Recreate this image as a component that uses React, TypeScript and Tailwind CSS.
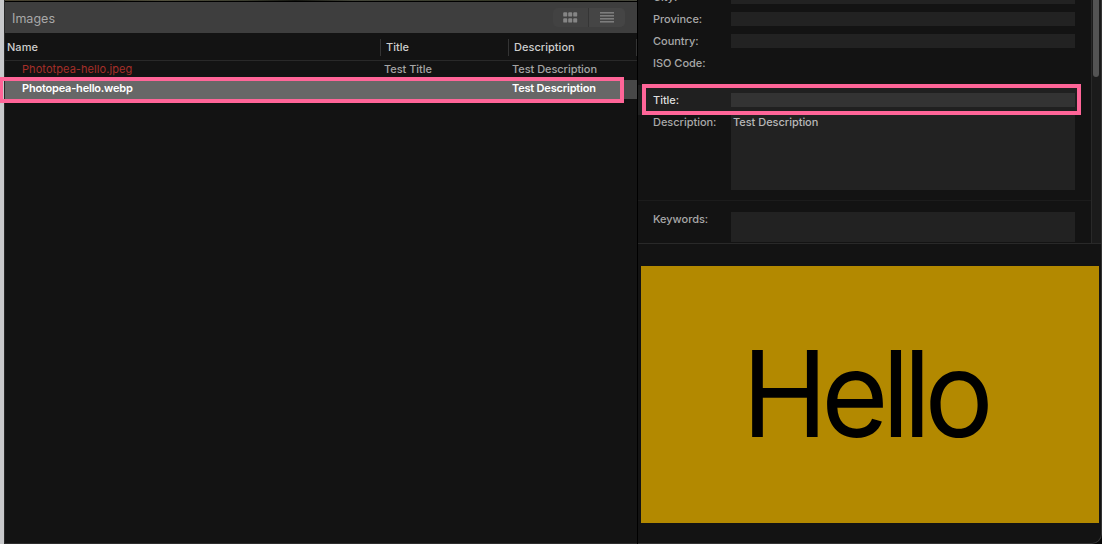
import React from "react";

const columns = "grid grid-cols-[375px_128px_1fr]";

function GridIcon() {
  return (
    <svg width="15" height="11" viewBox="0 0 15 11" fill="#858585">
      {[0, 6].map((y) =>
        [0, 5, 10].map((x) => (
          <rect key={`${x}-${y}`} x={x + 0.2} y={y + 0.2} width="4" height="4.4" rx="0.9" />
        )),
      )}
    </svg>
  );
}

function ListIcon() {
  return (
    <svg width="14" height="11" viewBox="0 0 14 11" fill="#969696">
      {[0, 3, 6, 9].map((y) => (
        <rect key={y} y={y + 0.3} width="14" height="1.1" />
      ))}
    </svg>
  );
}

function ImagesPanel() {
  return (
    <section className="flex h-full w-[633px] shrink-0 flex-col border-l border-[#292929] bg-[#131313]">
      <div className="h-px shrink-0 bg-[linear-gradient(90deg,#4a4432,#39382b_16%,#52503d_25%,#3c3e30_38%,#151611_46%,#44463a_55%,#343725_80%,#47483c)]" />
      <div className="h-px shrink-0 bg-black" />
      <header className="flex h-[31px] shrink-0 items-center justify-between bg-[#3e3e3e] pl-[7px] pr-[12px]">
        <h2 className="pt-[2px] text-[12.5px] leading-4 tracking-[0.02px] text-[#a8a8a8]">Images</h2>
        <div className="flex h-[19px] w-[72px] rounded-[5px] bg-[#424242]">
          <button aria-label="Grid view" className="flex w-[36px] items-center justify-center border-r border-[#353535]">
            <GridIcon />
          </button>
          <button aria-label="List view" className="flex flex-1 items-center justify-center rounded-r-[5px] bg-[#454545] pr-px">
            <ListIcon />
          </button>
        </div>
      </header>
      <div className={`${columns} h-[28px] shrink-0 border-b border-[#292929] text-[11px] font-medium leading-[27px] tracking-[0.03px] text-[#cecece]`}>
        <span className="pl-[2px] pt-px">Name</span>
        <span className="my-[6px] flex h-[17px] items-center border-l border-[#343434] pl-[5px]">Title</span>
        <span className="my-[6px] flex h-[17px] items-center border-x border-[#343434] pl-[5px]">Description</span>
      </div>
      <div className={`${columns} h-[19px] shrink-0 text-[11px] font-medium leading-[17px] tracking-[-0.05px] text-[#a4a4a4]`}>
        <span className="pl-[17px] font-normal tracking-[0.07px] text-[#a62f29]">Phototpea-hello.jpeg</span>
        <span className="pl-[4px]">Test Title</span>
        <span className="pl-[4px]">Test Description</span>
      </div>
      <div className="flex h-[19px] shrink-0 bg-[#484848]">
        <div className={`${columns} w-[617px] bg-[#676767] text-[11px] font-semibold leading-[17px] tracking-[-0.2px] text-white`}>
          <span className="pl-[17px]">Photopea-hello.webp</span>
          <span />
          <span className="pl-[4px]">Test Description</span>
        </div>
      </div>
      <div className="flex-1" />
      <div className="h-px bg-[#2d2d2d]" />
    </section>
  );
}

function Field({ label, labelClass, className, inputClass, value }: {
  label: string;
  labelClass?: string;
  className: string;
  inputClass?: string;
  value?: string;
}) {
  return (
    <div className={`flex shrink-0 pl-[15px] ${className}`}>
      <span className={`w-[78px] shrink-0 text-[11px] font-medium leading-[14px] tracking-[-0.03px] ${labelClass ?? "text-[#a8a8a8]"}`}>{label}</span>
      {inputClass && (
        <div className={`w-[344px] pl-[2px] text-[11px] font-medium leading-[14px] tracking-[-0.03px] text-[#b8b8b8] ${inputClass}`}>{value}</div>
      )}
    </div>
  );
}

function Metadata() {
  return (
    <div className="flex h-[243px] shrink-0 overflow-hidden">
      <form className="flex w-[453px] flex-col">
        <div className="-mt-[10px] flex flex-col">
          <Field label="City:" className="h-[22px]" inputClass="h-[14px] bg-[#222222]" />
          <Field label="Province:" className="h-[22px]" inputClass="h-[14px] bg-[#222222]" />
          <Field label="Country:" className="h-[22px]" inputClass="h-[14px] bg-[#222222]" />
          <Field label="ISO Code:" className="h-[29px]" />
        </div>
        <Field label="Title:" labelClass="text-[#dedede]" className="h-[30px] w-[442px] bg-[#202020] pt-[8px]" inputClass="h-[14px] bg-[#333333]" />
        <Field label="Description:" className="h-[85px]" inputClass="h-[75px] bg-[#222222]" value="Test Description" />
        <div className="h-px shrink-0 bg-[#1c1c1c]" />
        <Field label="Keywords:" className="h-[41px] pt-[11px]" inputClass="h-[30px] bg-[#222222]" />
      </form>
      <div className="flex flex-1 justify-end border-l border-[#292929] bg-[#1b1b1b] pr-[2px]">
        <div className="h-[77px] w-[6px] rounded-b-full bg-[#535353]" />
      </div>
    </div>
  );
}

export default function App() {
  return (
    <main className="relative flex h-[544px] w-[1102px] overflow-hidden bg-[#c8c9cb] pl-[4px] font-['Inter',sans-serif] antialiased">
      <ImagesPanel />
      <div className="w-px shrink-0 bg-black" />
      <div className="flex w-[464px] bg-[#070707]">
        <aside className="flex w-[464px] flex-col overflow-hidden rounded-br-[10px] border-b border-r border-[#343434] bg-[#131313]">
          <Metadata />
          <div className="h-px shrink-0 bg-[#292929]" />
          <div className="ml-[3px] mt-[22px] flex h-[257px] w-[458px] shrink-0 items-center bg-[#b38900] pl-[101px] text-[119px] leading-none tracking-[-6.8px] text-black">
            <span className="origin-left scale-x-[0.97]">Hello</span>
          </div>
        </aside>
      </div>
      <div className="pointer-events-none absolute left-[-1px] top-[77px] h-[26px] w-[625px] border-4 border-[#ff6598]" />
      <div className="pointer-events-none absolute left-[642px] top-[84px] h-[31px] w-[439px] border-4 border-[#ff6598]" />
    </main>
  );
}
